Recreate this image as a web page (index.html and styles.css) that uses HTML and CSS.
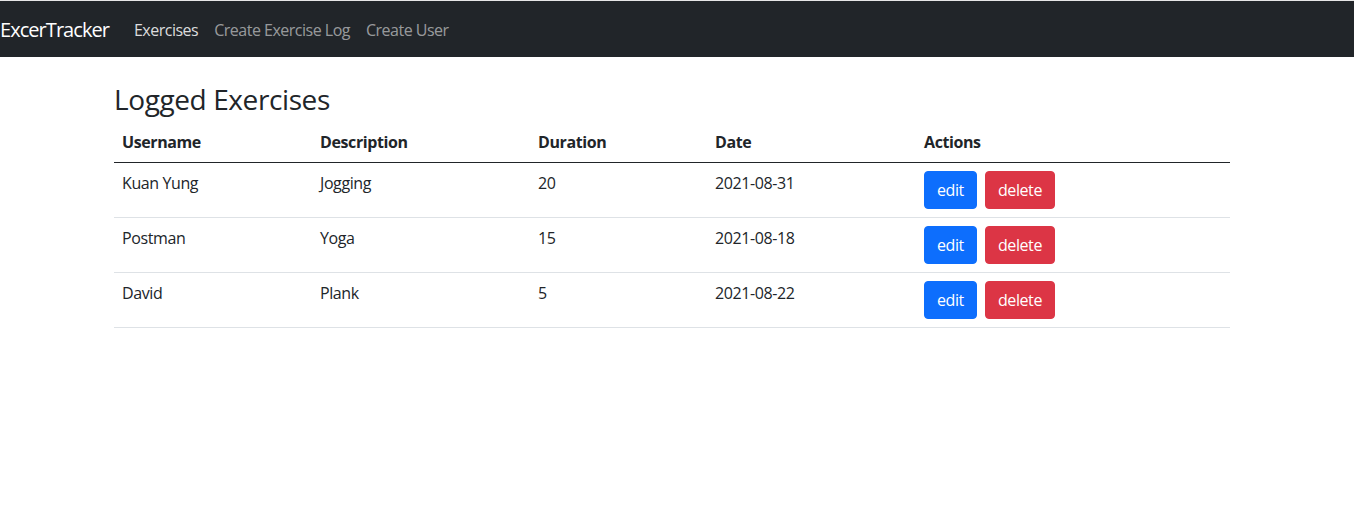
FILE: index.html
```html
<!DOCTYPE html>
<html lang="en">
<head>
<meta charset="utf-8">
<title>ExcerTracker</title>
<link rel="stylesheet" href="styles.css">
</head>
<body>
<nav class="navbar">
  <a class="brand" href="#">ExcerTracker</a>
  <ul class="nav">
    <li><a class="nav-link active" href="#">Exercises</a></li>
    <li><a class="nav-link" href="#">Create Exercise Log</a></li>
    <li><a class="nav-link" href="#">Create User</a></li>
  </ul>
</nav>
<main class="container">
  <h3 class="title">Logged Exercises</h3>
  <table class="table">
    <colgroup>
      <col class="c1"><col class="c2"><col class="c3"><col class="c4"><col class="c5">
    </colgroup>
    <thead>
      <tr><th>Username</th><th>Description</th><th>Duration</th><th>Date</th><th>Actions</th></tr>
    </thead>
    <tbody>
      <tr><td>Kuan Yung</td><td>Jogging</td><td>20</td><td>2021-08-31</td><td><div class="actions"><button class="btn btn-primary">edit</button><button class="btn btn-danger">delete</button></div></td></tr>
      <tr><td>Postman</td><td>Yoga</td><td>15</td><td>2021-08-18</td><td><div class="actions"><button class="btn btn-primary">edit</button><button class="btn btn-danger">delete</button></div></td></tr>
      <tr><td>David</td><td>Plank</td><td>5</td><td>2021-08-22</td><td><div class="actions"><button class="btn btn-primary">edit</button><button class="btn btn-danger">delete</button></div></td></tr>
    </tbody>
  </table>
</main>
</body>
</html>
```
FILE: styles.css
```css
* { box-sizing: border-box; }
html, body { margin: 0; padding: 0; }
body {
  font-family: "Open Sans", "Noto Sans", "Liberation Sans", sans-serif;
  font-size: 16px;
  line-height: 1.5;
  color: #212529;
  background: #fff;
  border-top: 1px solid #e6e6e6;
}
.navbar {
  background: #212529;
  height: 56px;
  display: flex;
  align-items: center;
  padding: 9px 0 7px;
}
.brand {
  color: #fff;
  text-decoration: none;
  font-size: 20px;
  line-height: 30px;
  padding: 5px 0;
  margin-right: 17px;
  letter-spacing: -0.95px;
}
.nav {
  list-style: none;
  margin: 0;
  padding: 0;
  display: flex;
}
.nav-link {
  display: block;
  padding: 8px 8px;
  color: rgba(255,255,255,.55);
  text-decoration: none;
  letter-spacing: -0.5px;
}
.nav-link.active { color: rgba(255,255,255,.85); }
.container {
  width: 1116px;
  margin: 0 0 0 114px;
  padding-top: 29px;
}
.title {
  margin: 0 0 10px;
  font-size: 28px;
  font-weight: 500;
  line-height: 26px;
  letter-spacing: -0.4px;
}
.table {
  width: 100%;
  border-collapse: collapse;
  table-layout: fixed;
}
.c1 { width: 198px; }
.c2 { width: 218px; }
.c3 { width: 177px; }
.c4 { width: 209px; }
.table th, .table td {
  padding: 8px;
  text-align: left;
  vertical-align: top;
  border-bottom: 1px solid #dee2e6;
  letter-spacing: -0.4px;
}
.table th { font-weight: 700; }
.table thead th { border-bottom: 1px solid #212529; vertical-align: bottom; }
.actions { display: flex; gap: 8px; }
.btn {
  font-family: inherit;
  font-size: 16px;
  line-height: 24px;
  padding: 6px 12px;
  border: 1px solid transparent;
  border-radius: 4px;
  color: #fff;
  letter-spacing: -0.4px;
}
.btn-primary { background: #0d6efd; border-color: #0d6efd; }
.btn-danger { background: #dc3545; border-color: #dc3545; }
```
